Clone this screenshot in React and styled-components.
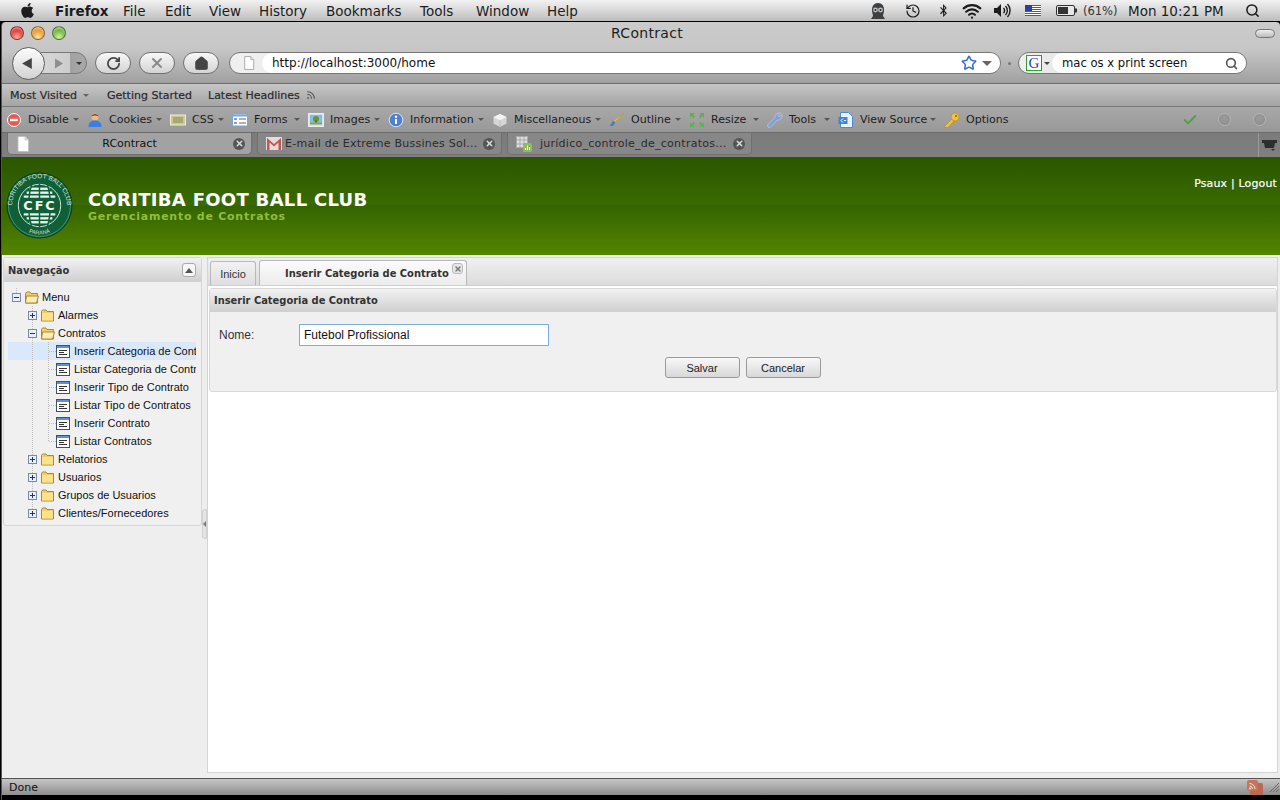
import React from "react";
import styled, { createGlobalStyle } from "styled-components";
import { FaApple, FaBluetoothB } from "react-icons/fa";
import { History, Wifi, Search, RotateCw, X, House, Star, Rss, Check } from "lucide-react";

const GlobalStyle = createGlobalStyle`
  html, body { margin: 0; padding: 0; background: #000; overflow: hidden; }
  * { box-sizing: border-box; }
`;

const MAC_FONT = `"DejaVu Sans", sans-serif`;
const BOLD_FONT = `"DejaVu Sans Condensed", "DejaVu Sans", sans-serif`;
const EXT_FONT = `"Liberation Sans", Arial, sans-serif`;

const Screen = styled.div`
  width: 1280px;
  height: 800px;
  display: flex;
  flex-direction: column;
  background: #000;
  font-family: ${MAC_FONT};
  overflow: hidden;
`;

/* ---------- mac menu bar ---------- */
const MenuBar = styled.div`
  height: 21px;
  flex: none;
  display: flex;
  align-items: center;
  background: linear-gradient(#f2f2f2, #d8d8d8 50%, #bcbcbc);
  font-size: 13.5px;
  color: #1c1c1c;
  padding-left: 19px;
`;
const MenuItem = styled.div`
  width: ${(p) => p.$w}px;
  flex: none;
  font-weight: ${(p) => (p.$bold ? 700 : 400)};
  white-space: nowrap;
`;
const TrayItem = styled.div`
  width: ${(p) => p.$w}px;
  flex: none;
  display: flex;
  align-items: center;
  justify-content: ${(p) => (p.$left ? "flex-start" : "center")};
  font-size: ${(p) => p.$size || 13.5}px;
  color: ${(p) => p.$color || "#1c1c1c"};
  white-space: nowrap;
`;

/* ---------- browser window ---------- */
const Browser = styled.div`
  flex: 1;
  margin-top: 1px;
  margin-left: 2px;
  display: flex;
  flex-direction: column;
  min-height: 0;
  border-radius: 4px 4px 0 0;
  box-shadow: -1px 0 0 #555;
`;
const Chrome = styled.div`
  height: 62px;
  flex: none;
  background: linear-gradient(#cbcbcb, #c6c6c6 45%, #a0a0a0);
  border-bottom: 1px solid #6e6e6e;
  border-radius: 4px 4px 0 0;
  display: flex;
  flex-direction: column;
`;
const TitleRow = styled.div`
  height: 30px;
  flex: none;
  display: flex;
  align-items: center;
  padding: 0 5px 8px 8px;
`;
const Light = styled.span`
  width: 14px;
  height: 14px;
  border-radius: 50%;
  margin-right: 7px;
  border: 1px solid rgba(60, 60, 60, 0.55);
  background: radial-gradient(circle at 50% 85%, ${(p) => p.$c1}, ${(p) => p.$c2} 70%);
  box-shadow: inset 0 2px 2px rgba(255, 255, 255, 0.45);
`;
const WindowTitle = styled.div`
  flex: 1;
  text-align: center;
  font-size: 14px;
  letter-spacing: 0.3px;
  color: #1e1e1e;
  padding-right: 34px;
`;
const Pill = styled.span`
  width: 20px;
  height: 9px;
  border-radius: 5px;
  border: 1px solid #777;
  background: linear-gradient(#eee, #bbb);
`;
const NavRow = styled.div`
  display: flex;
  align-items: flex-start;
  padding-left: 10px;
`;
const BackCircle = styled.div`
  width: 33px;
  height: 33px;
  margin-top: -5px;
  border-radius: 50%;
  border: 1px solid #5e5e5e;
  background: linear-gradient(#fdfdfd, #d2d2d2);
  display: flex;
  align-items: center;
  justify-content: center;
  padding-right: 3px;
  z-index: 1;
  flex: none;
`;
const ForwardCapsule = styled.div`
  width: 52px;
  height: 22px;
  margin-left: -10px;
  margin-right: 8px;
  border-radius: 0 11px 11px 0;
  border: 1px solid #777;
  background: linear-gradient(90deg, #d8d8d8, #cdcdcd 68%, #a2a2a2 69%, #a8a8a8);
  display: flex;
  align-items: center;
  padding-left: 18px;
  gap: 12px;
  flex: none;
`;
const NavPill = styled.div`
  width: 36px;
  height: 22px;
  margin-right: 8px;
  border-radius: 11px;
  border: 1px solid #707070;
  background: linear-gradient(#f8f8f8, #d4d4d4);
  display: flex;
  align-items: center;
  justify-content: center;
  flex: none;
`;
const UrlBar = styled.div`
  width: 772px;
  height: 22px;
  margin-left: 2px;
  border-radius: 11px;
  border: 1px solid #777;
  background: linear-gradient(90deg, #f0f0f0, #bdbdbd);
  display: flex;
  flex: none;
  overflow: hidden;
`;
const UrlLeft = styled.div`
  width: 32px;
  flex: none;
  display: flex;
  align-items: center;
  justify-content: center;
  padding-left: 6px;
`;
const UrlField = styled.div`
  flex: 1;
  background: #fff;
  border-radius: 10px 0 0 10px;
  display: flex;
  align-items: center;
  padding: 0 8px 0 10px;
  font-size: ${(p) => p.$size || 12}px;
  color: #111;
`;
const Spacer = styled.div`
  flex: 1;
`;
const Dot = styled.span`
  width: 3px;
  height: 3px;
  margin: 10px 7px 0 7px;
  border-radius: 50%;
  background: #777;
  flex: none;
`;
const SearchBar = styled(UrlBar)`
  width: 229px;
  margin-left: 0;
`;
const SearchLeft = styled.div`
  width: 33px;
  flex: none;
  display: flex;
  align-items: center;
  padding-left: 7px;
  gap: 2px;
`;
const GoogleBox = styled.span`
  width: 16px;
  height: 16px;
  border: 1px solid;
  border-color: #3a7de0 #d33 #2a2 #3a9a3a;
  background: #fff;
  color: #1f3fb0;
  font-family: "Liberation Serif", serif;
  font-size: 15px;
  line-height: 14px;
  text-align: center;
`;
const Caret = styled.span`
  width: 0;
  height: 0;
  flex: none;
  border-left: ${(p) => p.$s || 3}px solid transparent;
  border-right: ${(p) => p.$s || 3}px solid transparent;
  border-top: ${(p) => p.$s || 3}px solid ${(p) => p.$c || "#444"};
`;
const BookmarkRow = styled.div`
  height: 23px;
  flex: none;
  display: flex;
  align-items: center;
  background: linear-gradient(#c6c6c6, #a4a4a4);
  border-bottom: 1px solid #777;
  font-size: 11px;
  color: #2a2a2a;
  padding-left: 8px;
  -webkit-text-stroke: 0.2px #2a2a2a;
`;
const Bookmark = styled.div`
  width: ${(p) => p.$w}px;
  flex: none;
  display: flex;
  align-items: center;
  gap: ${(p) => p.$gap || 4}px;
  white-space: nowrap;
`;
const AddonRow = styled.div`
  height: 25px;
  flex: none;
  display: flex;
  align-items: center;
  background: linear-gradient(#a8a8a8, #989898);
  font-size: 11px;
  color: #1d1d1d;
  padding-left: 4px;
`;
const AddonItem = styled.div`
  width: ${(p) => p.$w}px;
  flex: none;
  display: flex;
  align-items: center;
  white-space: nowrap;
`;
const AddonIcon = styled.span`
  width: 16px;
  height: 16px;
  margin-right: 6px;
  flex: none;
  display: flex;
`;
const AddonLabel = styled.span`
  flex: 1;
`;
const AddonCaret = styled(Caret)`
  margin-right: 8px;
`;
const StatusLamp = styled.div`
  width: 35px;
  flex: none;
  display: flex;
  justify-content: center;
`;
const Lamp = styled.span`
  width: 13px;
  height: 13px;
  border-radius: 50%;
  border: 1px solid #b5b5b5;
  background: radial-gradient(circle at 50% 40%, #9c9c9c, #8a8a8a);
`;
const TabStrip = styled.div`
  height: 25px;
  flex: none;
  display: flex;
  align-items: flex-start;
  background: linear-gradient(#7b7b7b, #7f7f7f);
  border-top: 1px solid #6c6c6c;
  padding-left: 5px;
  font-size: 11px;
`;
const BrowserTab = styled.div`
  width: 245px;
  height: 22px;
  flex: none;
  margin-right: 5px;
  display: flex;
  align-items: center;
  padding: 0 6px 0 8px;
  border-radius: 0 0 5px 5px;
  background: ${(p) => (p.$active ? "#a2a2a2" : "#878787")};
  border: 1px solid #6f6f6f;
  border-top: none;
  color: ${(p) => (p.$active ? "#111" : "#2b2b2b")};
  letter-spacing: ${(p) => (p.$active ? "0" : "0.25px")};
`;
const TabTitle = styled.span`
  flex: 1;
  min-width: 0;
  white-space: nowrap;
  text-align: ${(p) => (p.$center ? "center" : "left")};
  padding-left: ${(p) => p.$pad || 0}px;
  padding-right: ${(p) => (p.$center ? 4 : 0)}px;
`;
const TabClose = styled.span`
  width: 12px;
  height: 12px;
  flex: none;
  border-radius: 50%;
  display: flex;
  align-items: center;
  justify-content: center;
  background: ${(p) => (p.$active ? "#5c5c5c" : "#555")};
  color: #ddd;
`;
const AllTabs = styled.div`
  width: 22px;
  height: 24px;
  flex: none;
  border-left: 1px solid #9a9a9a;
  margin-left: auto;
  display: flex;
  align-items: center;
  justify-content: center;
`;

/* ---------- application ---------- */
const Page = styled.div`
  flex: 1;
  min-height: 0;
  display: flex;
  flex-direction: column;
  background: #eeeeee;
`;
const Banner = styled.div`
  height: 99px;
  flex: none;
  display: flex;
  align-items: flex-start;
  padding: 15px 3px 0 4px;
  background: linear-gradient(#2a5600, #3a6a00 48%, #346400 50%, #558500 100%);
  border-bottom: 1px solid #e6efb4;
`;
const BrandText = styled.div`
  margin: 18px 0 0 15px;
  display: flex;
  flex-direction: column;
`;
const BrandTitle = styled.div`
  font-size: 18px;
  line-height: 20px;
  font-weight: 700;
  letter-spacing: 0.3px;
  color: #fff;
`;
const BrandSub = styled.div`
  font-size: 11px;
  line-height: 13px;
  font-weight: 700;
  letter-spacing: 0.75px;
  color: #8fbe3c;
`;
const UserLinks = styled.div`
  margin: 5px 0 0 auto;
  font-size: 11px;
  letter-spacing: 0.15px;
  color: #fff;
  -webkit-text-stroke: 0.2px #fff;
`;
const Workspace = styled.div`
  flex: 1;
  min-height: 0;
  display: flex;
  padding: 1px 2px 5px 1px;
`;
const Sidebar = styled.div`
  width: 199px;
  height: 269px;
  flex: none;
  background: #f0f0f0;
  border: 1px solid #d6d6d6;
  border-radius: 3px;
  display: flex;
  flex-direction: column;
`;
const PanelHeader = styled.div`
  height: 24px;
  flex: none;
  display: flex;
  align-items: center;
  justify-content: space-between;
  padding: 0 5px 0 4px;
  background: linear-gradient(#f2f2f2, #cfcfcf);
  font-family: ${BOLD_FONT};
  font-size: 11px;
  font-weight: 700;
  color: #333;
`;
const CollapseButton = styled.span`
  width: 14px;
  height: 14px;
  border: 1px solid #aaa;
  border-radius: 3px;
  background: #f6f6f6;
  display: flex;
  align-items: center;
  justify-content: center;
`;
const Tree = styled.div`
  padding: 6px 5px 0 4px;
  display: flex;
  flex-direction: column;
  font-family: ${EXT_FONT};
  font-size: 11px;
  color: #111;
`;
const TreeRow = styled.div`
  height: 18px;
  width: 188px;
  flex: none;
  display: flex;
  align-items: center;
  overflow: hidden;
  white-space: nowrap;
  background: ${(p) => (p.$selected ? "#d9e8fb" : "transparent")};
`;
const TreeIcon = styled.span`
  width: 17px;
  height: 18px;
  flex: none;
  display: flex;
  align-items: center;
`;
const TreeText = styled.span`
  padding-left: 1px;
`;
const Splitter = styled.div`
  width: 5px;
  flex: none;
  display: flex;
  align-items: flex-start;
`;
const SplitHandle = styled.div`
  width: 5px;
  height: 30px;
  margin-top: 252px;
  background: #e4e4e4;
  border: 1px solid #d0d0d0;
  border-radius: 3px 0 0 3px;
  display: flex;
  align-items: center;
`;
const Content = styled.div`
  flex: 1;
  min-width: 0;
  background: #fff;
  border: 1px solid #d4d4d4;
  display: flex;
  flex-direction: column;
`;
const TabBar = styled.div`
  height: 28px;
  flex: none;
  display: flex;
  align-items: flex-end;
  gap: 3px;
  padding-left: 2px;
  background: linear-gradient(#f0f0f0, #dcdcdc);
  border-bottom: 1px solid #cfcfcf;
`;
const PageTab = styled.div`
  height: ${(p) => (p.$active ? 25 : 24)}px;
  width: ${(p) => p.$w}px;
  border: 1px solid #b9b9b9;
  border-bottom: none;
  border-radius: 3px 3px 0 0;
  background: ${(p) => (p.$active ? "linear-gradient(#fbfbfb, #ececec)" : "linear-gradient(#f2f2f2, #dedede)")};
  font-size: 11px;
  font-weight: ${(p) => (p.$active ? 700 : 400)};
  font-family: ${(p) => (p.$active ? BOLD_FONT : EXT_FONT)};
  color: #333;
  white-space: nowrap;
  display: flex;
  align-items: center;
  justify-content: ${(p) => (p.$active ? "flex-start" : "center")};
  padding-left: ${(p) => (p.$active ? 25 : 0)}px;
  position: relative;
`;
const PageTabClose = styled.span`
  position: absolute;
  right: 3px;
  top: 2px;
  width: 11px;
  height: 11px;
  border: 1px solid #bbb;
  border-radius: 3px;
  background: #e6e6e6;
  color: #777;
  display: flex;
  align-items: center;
  justify-content: center;
`;
const FormPanel = styled.div`
  margin: 2px 0 0 1px;
  border: 1px solid #d8d8d8;
  border-radius: 3px;
  background: #f0f0f0;
  display: flex;
  flex-direction: column;
`;
const FormHeader = styled(PanelHeader)`
  height: 23px;
  padding-left: 4px;
  justify-content: flex-start;
`;
const FormBody = styled.div`
  height: 79px;
  padding: 12px 0 0 9px;
  display: flex;
  flex-direction: column;
  font-family: ${EXT_FONT};
`;
const FieldRow = styled.div`
  display: flex;
  align-items: center;
  font-size: 12px;
  color: #333;
`;
const FieldLabel = styled.label`
  width: 80px;
  flex: none;
`;
const TextInput = styled.div`
  width: 250px;
  height: 22px;
  border: 1px solid #7eaee0;
  background: #fff;
  font-size: 12px;
  color: #111;
  display: flex;
  align-items: center;
  padding-left: 4px;
`;
const ButtonRow = styled.div`
  margin-top: 11px;
  display: flex;
  justify-content: center;
  gap: 6px;
  padding-right: 10px;
`;
const FormButton = styled.div`
  width: 75px;
  height: 21px;
  border: 1px solid #9a9a9a;
  border-radius: 3px;
  background: linear-gradient(#f8f8f8, #d8d8d8);
  font-size: 11px;
  color: #222;
  display: flex;
  align-items: center;
  justify-content: center;
`;
const StatusBar = styled.div`
  height: 17px;
  flex: none;
  border-top: 1px solid #555;
  background: linear-gradient(#c6c6c6, #8d8d8d);
  display: flex;
  align-items: center;
  padding: 1px 1px 0 7px;
  font-size: 11px;
  color: #111;
`;
const BottomEdge = styled.div`
  height: 5px;
  flex: none;
  background: #000;
`;

/* ---------- drawings ---------- */
const Gremlin = () => (
  <svg width="16" height="18" viewBox="0 0 16 18">
    <path d="M8 1c4 0 6 3 6 7 0 3-1 4-1 6l2 3H1l2-3c0-2-1-3-1-6 0-4 2-7 6-7z" fill="#3f3f3f" />
    <circle cx="5.5" cy="8" r="2.4" fill="#b9c4cc" />
    <circle cx="10.5" cy="8" r="2.4" fill="#b9c4cc" />
    <circle cx="5.5" cy="8" r="1" fill="#222" />
    <circle cx="10.5" cy="8" r="1" fill="#222" />
  </svg>
);
const Speaker = () => (
  <svg width="18" height="15" viewBox="0 0 18 15">
    <path d="M1 5h3l4-4v13l-4-4H1z" fill="#1c1c1c" />
    <path d="M10.500 5a3.500 3.500 0 0 1 0 5M12.500 3a6.500 6.500 0 0 1 0 9M14.500 1a9.500 9.500 0 0 1 0 13" fill="none" stroke="#1c1c1c" strokeWidth="1.400" />
  </svg>
);
const Flag = () => (
  <svg width="16" height="11" viewBox="0 0 16 11">
    <rect width="16" height="11" fill="#fff" />
    {[0, 2, 4, 6, 8, 10].map((y) => (
      <rect key={y} y={y} width="16" height="1" fill="#d8262c" />
    ))}
    <rect width="7" height="6" fill="#2c3f9e" />
  </svg>
);
const Battery = () => (
  <svg width="21" height="11" viewBox="0 0 21 11">
    <rect x="0.5" y="0.5" width="18" height="10" rx="1.5" fill="#e8e8e8" stroke="#333" />
    <rect x="2" y="2" width="10" height="7" fill="#333" />
    <rect x="19" y="3.5" width="2" height="4" fill="#333" />
  </svg>
);
const PageDoc = ({ size = 14, line = "#8a8a8a" }) => (
  <svg width={size} height={size + 2} viewBox="0 0 14 16" style={{ flex: "none" }}>
    <path d="M2 .5h7l3.500 3.500v11.500H2z" fill="#fff" stroke={line} strokeWidth="0.8" />
    <path d="M9 .5V4h3.500" fill="#ddd" stroke={line} strokeWidth="0.6" />
  </svg>
);
const BackArrow = ({ color, size = 12 }) => (
  <svg width={size} height={size} viewBox="0 0 12 12">
    <path d="M10 1v10L1 6z" fill={color} />
  </svg>
);
const DisableIcon = () => (
  <svg width="16" height="16" viewBox="0 0 16 16">
    <circle cx="8" cy="8" r="6.5" fill="#e65a50" stroke="#fff" strokeWidth="1" />
    <rect x="4" y="6.8" width="8" height="2.4" fill="#fff" />
  </svg>
);
const CookieIcon = () => (
  <svg width="16" height="16" viewBox="0 0 16 16">
    <circle cx="8" cy="5" r="3.6" fill="#eeb98b" />
    <path d="M4.400 4.500C4.400 1 11.600 1 11.600 4.500 9 3 7 3 4.400 4.500z" fill="#7a4a21" />
    <path d="M1.500 15c0-5 3-6.500 6.500-6.500s6.500 1.500 6.500 6.500z" fill="#3b7fe0" />
  </svg>
);
const CssIcon = () => (
  <svg width="16" height="16" viewBox="0 0 16 16">
    <rect x="0.5" y="3" width="15" height="10" fill="#c9c88f" stroke="#efefcf" />
    <rect x="3" y="5" width="10" height="6" fill="#a9a875" />
  </svg>
);
const FormsIcon = () => (
  <svg width="16" height="16" viewBox="0 0 16 16">
    <rect x="0.5" y="2" width="15" height="12" fill="#fff" stroke="#7ba3dc" />
    <rect x="1" y="2.5" width="14" height="2" fill="#7ba3dc" />
    <path d="M2 7h3M2 11h3" stroke="#5a86c8" strokeWidth="1.5" />
    <path d="M7 7h7M7 11h7" stroke="#999" strokeWidth="1.5" />
  </svg>
);
const ImagesIcon = () => (
  <svg width="16" height="16" viewBox="0 0 16 16">
    <rect x="0.5" y="1.5" width="15" height="13" fill="#cfe0f4" stroke="#eee" />
    <rect x="2" y="3" width="12" height="8" fill="#8bb8e8" />
    <circle cx="8" cy="7" r="3" fill="#5f9a38" />
    <rect x="7.3" y="8" width="1.4" height="4" fill="#7a5a2a" />
    <rect x="2" y="10.5" width="12" height="2" fill="#86a94c" />
  </svg>
);
const InfoIcon = () => (
  <svg width="16" height="16" viewBox="0 0 16 16">
    <circle cx="8" cy="8" r="6.8" fill="#4c82cf" stroke="#dbe6f5" />
    <rect x="7" y="7" width="2" height="5" fill="#fff" />
    <circle cx="8" cy="4.8" r="1.2" fill="#fff" />
  </svg>
);
const MiscIcon = () => (
  <svg width="16" height="16" viewBox="0 0 16 16">
    <path d="M8 2l6.500 3v6.500L8 15l-6.500-3.500V5z" fill="#d6d6d6" />
    <path d="M8 2l6.500 3L8 8.200 1.500 5z" fill="#f4f4f4" />
    <path d="M8 8.200V15" stroke="#bdbdbd" />
  </svg>
);
const OutlineIcon = () => (
  <svg width="16" height="16" viewBox="0 0 16 16">
    <path d="M15 1.500L6 10l-1.500-1.500z" fill="#e8c24a" stroke="#b8902a" strokeWidth="0.5" />
    <path d="M4.500 9c-2 .5-1.500 3-4 5 3 .5 5-.5 5.500-3.500z" fill="#4a78c8" />
  </svg>
);
const ResizeIcon = () => (
  <svg width="16" height="16" viewBox="0 0 16 16">
    <path d="M1 1h5l-2 1.500 2 2-1.500 1.500-2-2L1 6zM15 1v5l-1.500-2-2 2L10 4.500l2-2L10 1zM1 15v-5l1.500 2 2-2L6 11.500l-2 2L6 15zM15 15h-5l2-1.500-2-2 1.500-1.500 2 2L15 10z" fill="#5db050" />
  </svg>
);
const ToolsIcon = () => (
  <svg width="16" height="16" viewBox="0 0 16 16">
    <path d="M1 15l-.5-2 7.500-7.500C7.500 3 10 .5 13.500 1L11 3.500l1.500 1.500L15 2.500c.5 3.500-2 6-4.500 5.500L3 15.500z" fill="#7e9fd8" stroke="#dbe4f5" strokeWidth="0.5" />
  </svg>
);
const SourceIcon = () => (
  <svg width="16" height="16" viewBox="0 0 16 16">
    <path d="M2.500.5h8l4 4v11h-12z" fill="#eaf2fb" stroke="#4a8ad8" />
    <rect x="0.500" y="5" width="9" height="7" fill="#3a86d8" />
    <path d="M5 6.500L3 8.500l2 2M6 8.500h2" stroke="#fff" fill="none" />
  </svg>
);
const KeyIcon = () => (
  <svg width="16" height="16" viewBox="0 0 16 16">
    <circle cx="11" cy="5" r="4" fill="#f0c23a" stroke="#b98a1a" strokeWidth="0.6" />
    <path d="M8 7L1 14v1.500h3L5 14h1.500v-1.500L9.500 9.500z" fill="#f0c23a" stroke="#b98a1a" strokeWidth="0.6" />
    <circle cx="12" cy="4" r="1" fill="#8a6510" />
  </svg>
);
const GmailIcon = () => (
  <svg width="16" height="13" viewBox="0 0 16 13" style={{ flex: "none" }}>
    <rect width="16" height="13" fill="#e4dcdc" />
    <path d="M1 13V1l7 6 7-6v12h-2.500V5.500L8 9.500 3.500 5.500V13z" fill="#c05850" />
  </svg>
);
const SheetIcon = () => (
  <svg width="16" height="16" viewBox="0 0 16 16" style={{ flex: "none" }}>
    <rect x="0.500" y="0.500" width="11" height="11" fill="#ddd" stroke="#aaa" />
    <path d="M0 4h12M0 8h12M4 0v12M8 0v12" stroke="#999" strokeWidth="0.7" />
    <rect x="7" y="7" width="9" height="9" rx="1.500" fill="#8cbc5c" />
    <path d="M9.500 14v-2M11.500 14V9.500M13.500 14v-3" stroke="#fff" />
  </svg>
);
const Logo = () => (
  <svg width="67" height="67" viewBox="0 0 68 68" style={{ flex: "none" }}>
    <defs>
      <path id="ringTop" d="M11.500 50.500A27.800 27.800 0 1 1 56.500 50.500" />
      <path id="ringBottom" d="M17 58a29.500 29.500 0 0 0 34 0" />
    </defs>
    <circle cx="34" cy="34" r="33" fill="#0f5f38" stroke="#063d22" />
    <circle cx="34" cy="34" r="31.500" fill="none" stroke="#6da888" strokeWidth="0.7" />
    <circle cx="34" cy="34" r="21.500" fill="#0f5f38" stroke="#cfe6d8" strokeWidth="1" />
    <text fontFamily="Liberation Sans, sans-serif" fontSize="6.500" fill="#cfe3d6">
      <textPath href="#ringTop" startOffset="50%" textAnchor="middle">CORITIBA FOOT BALL CLUB</textPath>
    </text>
    <text fontFamily="Liberation Sans, sans-serif" fontSize="5.500" fill="#cfe3d6">
      <textPath href="#ringBottom" startOffset="50%" textAnchor="middle">PARANÁ</textPath>
    </text>
    {[-17, -13, -9].map((y, i) => (
      <path key={y} d={`M${34 - (10 + i * 3)} ${34 + y}h${2 * (10 + i * 3)}`} stroke="#e8f2ec" strokeWidth="2.400" />
    ))}
    {[9, 13, 17].map((y, i) => (
      <path key={y} d={`M${34 - (16 - i * 3)} ${34 + y}h${2 * (16 - i * 3)}`} stroke="#e8f2ec" strokeWidth="2.400" />
    ))}
    <path d="M34 12v44M26 13c-4 12-4 30 0 42M42 13c4 12 4 30 0 42" stroke="#0f5f38" strokeWidth="1.500" fill="none" />
    <text x="34.500" y="39" textAnchor="middle" fontFamily="DejaVu Sans, sans-serif" fontWeight="700" fontSize="13" letterSpacing="2" fill="#f2f8f4">CFC</text>
  </svg>
);

const GUIDE = "#bdbdbd";
const Elbow = ({ kind }) => {
  const vLine = (y1, y2) => <path d={`M8.500 ${y1}V${y2}`} stroke={GUIDE} strokeDasharray="1 1" />;
  const box = kind === "plus" || kind === "minus" || kind === "rootMinus" || kind === "lastPlus";
  return (
    <svg width="16" height="18" viewBox="0 0 16 18" style={{ flex: "none" }}>
      {kind === "line" && vLine(0, 18)}
      {kind === "tee" && vLine(0, 18)}
      {kind === "end" && vLine(0, 9)}
      {(kind === "tee" || kind === "end") && <path d="M9 9.500H16" stroke={GUIDE} strokeDasharray="1 1" />}
      {(kind === "plus" || kind === "minus") && vLine(0, 18)}
      {kind === "lastPlus" && vLine(0, 9)}
      {kind === "rootMinus" && vLine(0, 5)}
      {box && (
        <>
          <rect x="4.500" y="5.500" width="8" height="8" fill="#e9eef6" stroke="#7a8aa6" />
          <path d="M6 9.500h5" stroke="#24365c" />
          {(kind === "plus" || kind === "lastPlus") && <path d="M8.500 7v5" stroke="#24365c" />}
        </>
      )}
    </svg>
  );
};
const Folder = ({ open }) => (
  <svg width="15" height="13" viewBox="0 0 15 13">
    <path d="M1.500 2.500l1-1.500h3.500l1 1.500h6.500v9.500h-12z" fill="#f0cf6a" stroke="#a8893c" />
    {open ? (
      <path d="M2.500 5h12l-2 7h-11z" fill="#fdeeb0" stroke="#a8893c" />
    ) : (
      <rect x="2" y="4" width="11" height="7.500" fill="#fde28a" />
    )}
  </svg>
);
const FormDoc = () => (
  <svg width="14" height="13" viewBox="0 0 14 13">
    <rect x="0.500" y="0.500" width="13" height="12" fill="#fff" stroke="#445068" />
    <rect x="1" y="1" width="12" height="2" fill="#5f8fe0" />
    <path d="M3 5.500h8M3 7.500h5M3 9.500h8" stroke="#333" />
  </svg>
);

const menuItems = [
  ["Firefox", 68, true], ["File", 42], ["Edit", 44], ["View", 50], ["History", 67],
  ["Bookmarks", 94], ["Tools", 56], ["Window", 71], ["Help", 60],
];

const addons = [
  ["Disable", <DisableIcon />, 81],
  ["Cookies", <CookieIcon />, 83],
  ["CSS", <CssIcon />, 62],
  ["Forms", <FormsIcon />, 76],
  ["Images", <ImagesIcon />, 80],
  ["Information", <InfoIcon />, 104],
  ["Miscellaneous", <MiscIcon />, 117],
  ["Outline", <OutlineIcon />, 80],
  ["Resize", <ResizeIcon />, 78],
  ["Tools", <ToolsIcon />, 71],
  ["View Source", <SourceIcon />, 106],
  ["Options", <KeyIcon />, 228],
];

const tree = [
  { label: "Menu", guides: [], elbow: "rootMinus", folder: "open" },
  { label: "Alarmes", guides: ["blank"], elbow: "plus", folder: "closed" },
  { label: "Contratos", guides: ["blank"], elbow: "minus", folder: "open" },
  { label: "Inserir Categoria de Contrato", guides: ["blank", "line"], elbow: "tee", selected: true },
  { label: "Listar Categoria de Contratos", guides: ["blank", "line"], elbow: "tee" },
  { label: "Inserir Tipo de Contrato", guides: ["blank", "line"], elbow: "tee" },
  { label: "Listar Tipo de Contratos", guides: ["blank", "line"], elbow: "tee" },
  { label: "Inserir Contrato", guides: ["blank", "line"], elbow: "tee" },
  { label: "Listar Contratos", guides: ["blank", "line"], elbow: "end" },
  { label: "Relatorios", guides: ["blank"], elbow: "plus", folder: "closed" },
  { label: "Usuarios", guides: ["blank"], elbow: "plus", folder: "closed" },
  { label: "Grupos de Usuarios", guides: ["blank"], elbow: "plus", folder: "closed" },
  { label: "Clientes/Fornecedores", guides: ["blank"], elbow: "lastPlus", folder: "closed" },
];

export default function App() {
  return (
    <Screen>
      <GlobalStyle />
      <MenuBar>
        <MenuItem $w={36}><FaApple size={17} style={{ display: "block" }} /></MenuItem>
        {menuItems.map(([label, w, bold]) => (
          <MenuItem key={label} $w={w} $bold={bold}>{label}</MenuItem>
        ))}
        <Spacer />
        <TrayItem $w={38}><Gremlin /></TrayItem>
        <TrayItem $w={32}><History size={16} strokeWidth={1.800} /></TrayItem>
        <TrayItem $w={28}><FaBluetoothB size={13} /></TrayItem>
        <TrayItem $w={30}><Wifi size={20} strokeWidth={2.600} /></TrayItem>
        <TrayItem $w={30}><Speaker /></TrayItem>
        <TrayItem $w={32}><Flag /></TrayItem>
        <TrayItem $w={34}><Battery /></TrayItem>
        <TrayItem $w={45} $left $size={11.500} $color="#333">(61%)</TrayItem>
        <TrayItem $w={109} $left>Mon 10:21 PM</TrayItem>
        <TrayItem $w={30}><Search size={15} strokeWidth={2.400} /></TrayItem>
        <TrayItem $w={13} />
      </MenuBar>

      <Browser>
        <Chrome>
          <TitleRow>
            <Light $c1="#ffb0a0" $c2="#d8201c" />
            <Light $c1="#ffe39a" $c2="#e08a18" />
            <Light $c1="#d4f2a0" $c2="#5aa928" />
            <WindowTitle>RContract</WindowTitle>
            <Pill />
          </TitleRow>
          <NavRow>
            <BackCircle><BackArrow color="#444" size={13} /></BackCircle>
            <ForwardCapsule>
              <svg width="10" height="11" viewBox="0 0 10 11"><path d="M1 .5v10l8-5z" fill="#8e8e8e" /></svg>
              <Caret $c="#333" />
            </ForwardCapsule>
            <NavPill><RotateCw size={15} strokeWidth={2.800} color="#444" /></NavPill>
            <NavPill><X size={16} strokeWidth={3} color="#8a8a8a" /></NavPill>
            <NavPill><House size={15} fill="#444" color="#444" /></NavPill>
            <UrlBar>
              <UrlLeft><PageDoc size={12} /></UrlLeft>
              <UrlField>
                http://localhost:3000/home
                <Spacer />
                <Star size={16} color="#3a6fd8" strokeWidth={2.400} style={{ marginRight: 5 }} />
                <Caret $s={5} $c="#666" />
              </UrlField>
            </UrlBar>
            <Dot />
            <SearchBar>
              <SearchLeft><GoogleBox>G</GoogleBox><Caret /></SearchLeft>
              <UrlField $size={11.600}>
                mac os x print screen
                <Spacer />
                <Search size={13} strokeWidth={3} color="#555" />
              </UrlField>
            </SearchBar>
          </NavRow>
        </Chrome>

        <BookmarkRow>
          <Bookmark $w={97} $gap={6}>Most Visited <Caret $s={3.500} $c="#666" /></Bookmark>
          <Bookmark $w={101}>Getting Started</Bookmark>
          <Bookmark $w={120} $gap={6}>Latest Headlines <Rss size={10} strokeWidth={2.500} color="#555" /></Bookmark>
        </BookmarkRow>

        <AddonRow>
          {addons.map(([label, icon, w]) => (
            <AddonItem key={label} $w={w}>
              <AddonIcon>{icon}</AddonIcon>
              <AddonLabel>{label}</AddonLabel>
              {label !== "Options" && <AddonCaret $c="#555" />}
            </AddonItem>
          ))}
          <StatusLamp><Check size={16} strokeWidth={3} color="#4fa04a" /></StatusLamp>
          <StatusLamp><Lamp /></StatusLamp>
          <StatusLamp><Lamp /></StatusLamp>
        </AddonRow>

        <TabStrip>
          <BrowserTab $active>
            <PageDoc size={14} line="#bdbdbd" />
            <TabTitle $center>RContract</TabTitle>
            <TabClose><X size={9} strokeWidth={4} /></TabClose>
          </BrowserTab>
          <BrowserTab>
            <GmailIcon />
            <TabTitle $pad={3}>E-mail de Extreme Bussines Sol...</TabTitle>
            <TabClose><X size={9} strokeWidth={4} /></TabClose>
          </BrowserTab>
          <BrowserTab>
            <SheetIcon />
            <TabTitle $pad={8}>jurídico_controle_de_contratos...</TabTitle>
            <TabClose><X size={9} strokeWidth={4} /></TabClose>
          </BrowserTab>
          <AllTabs>
            <svg width="15" height="12" viewBox="0 0 15 12"><path d="M0 1h15v3h-2l-1 5H3L2 4H0z" fill="#2e2e2e" /><path d="M9 10h4l-2 2z" fill="#2e2e2e" /></svg>
          </AllTabs>
        </TabStrip>

        <Page>
          <Banner>
            <Logo />
            <BrandText>
              <BrandTitle>CORITIBA FOOT BALL CLUB</BrandTitle>
              <BrandSub>Gerenciamento de Contratos</BrandSub>
            </BrandText>
            <UserLinks>Psaux | Logout</UserLinks>
          </Banner>

          <Workspace>
            <Sidebar>
              <PanelHeader>
                Navegação
                <CollapseButton><svg width="8" height="5" viewBox="0 0 8 5"><path d="M4 0l4 5H0z" fill="#555" /></svg></CollapseButton>
              </PanelHeader>
              <Tree>
                {tree.map((node) => (
                  <TreeRow key={node.label} $selected={node.selected}>
                    {node.guides.map((g, i) => (
                      <Elbow key={i} kind={g} />
                    ))}
                    <Elbow kind={node.elbow} />
                    <TreeIcon>
                      {node.folder ? <Folder open={node.folder === "open"} /> : <FormDoc />}
                    </TreeIcon>
                    <TreeText>{node.label}</TreeText>
                  </TreeRow>
                ))}
              </Tree>
            </Sidebar>
            <Splitter>
              <SplitHandle><svg width="3" height="6" viewBox="0 0 3 6"><path d="M3 0v6L0 3z" fill="#777" /></svg></SplitHandle>
            </Splitter>
            <Content>
              <TabBar>
                <PageTab $w={46}>Inicio</PageTab>
                <PageTab $w={208} $active>
                  Inserir Categoria de Contrato
                  <PageTabClose><X size={8} strokeWidth={4} /></PageTabClose>
                </PageTab>
              </TabBar>
              <FormPanel>
                <FormHeader>Inserir Categoria de Contrato</FormHeader>
                <FormBody>
                  <FieldRow>
                    <FieldLabel>Nome:</FieldLabel>
                    <TextInput>Futebol Profissional</TextInput>
                  </FieldRow>
                  <ButtonRow>
                    <FormButton>Salvar</FormButton>
                    <FormButton>Cancelar</FormButton>
                  </ButtonRow>
                </FormBody>
              </FormPanel>
            </Content>
          </Workspace>

          <StatusBar>
            Done
            <Spacer />
            <svg width="17" height="16" viewBox="0 0 17 16" style={{ marginRight: 6 }}>
              <rect x="3" y="3" width="13" height="13" rx="2" fill="#b96a52" />
              <rect x="0" y="0" width="11" height="11" rx="2" fill="#c8745a" />
              <path d="M2.500 3.500a5.500 5.500 0 0 1 5.500 5.500M2.500 6a3 3 0 0 1 3 3" stroke="#f2e0d8" fill="none" />
              <circle cx="3" cy="8.500" r="1" fill="#f2e0d8" />
            </svg>
            <svg width="9" height="9" viewBox="0 0 9 9"><path d="M9 0L0 9M9 3L3 9M9 6L6 9" stroke="#666" /></svg>
          </StatusBar>
        </Page>
        <BottomEdge />
      </Browser>
    </Screen>
  );
}
